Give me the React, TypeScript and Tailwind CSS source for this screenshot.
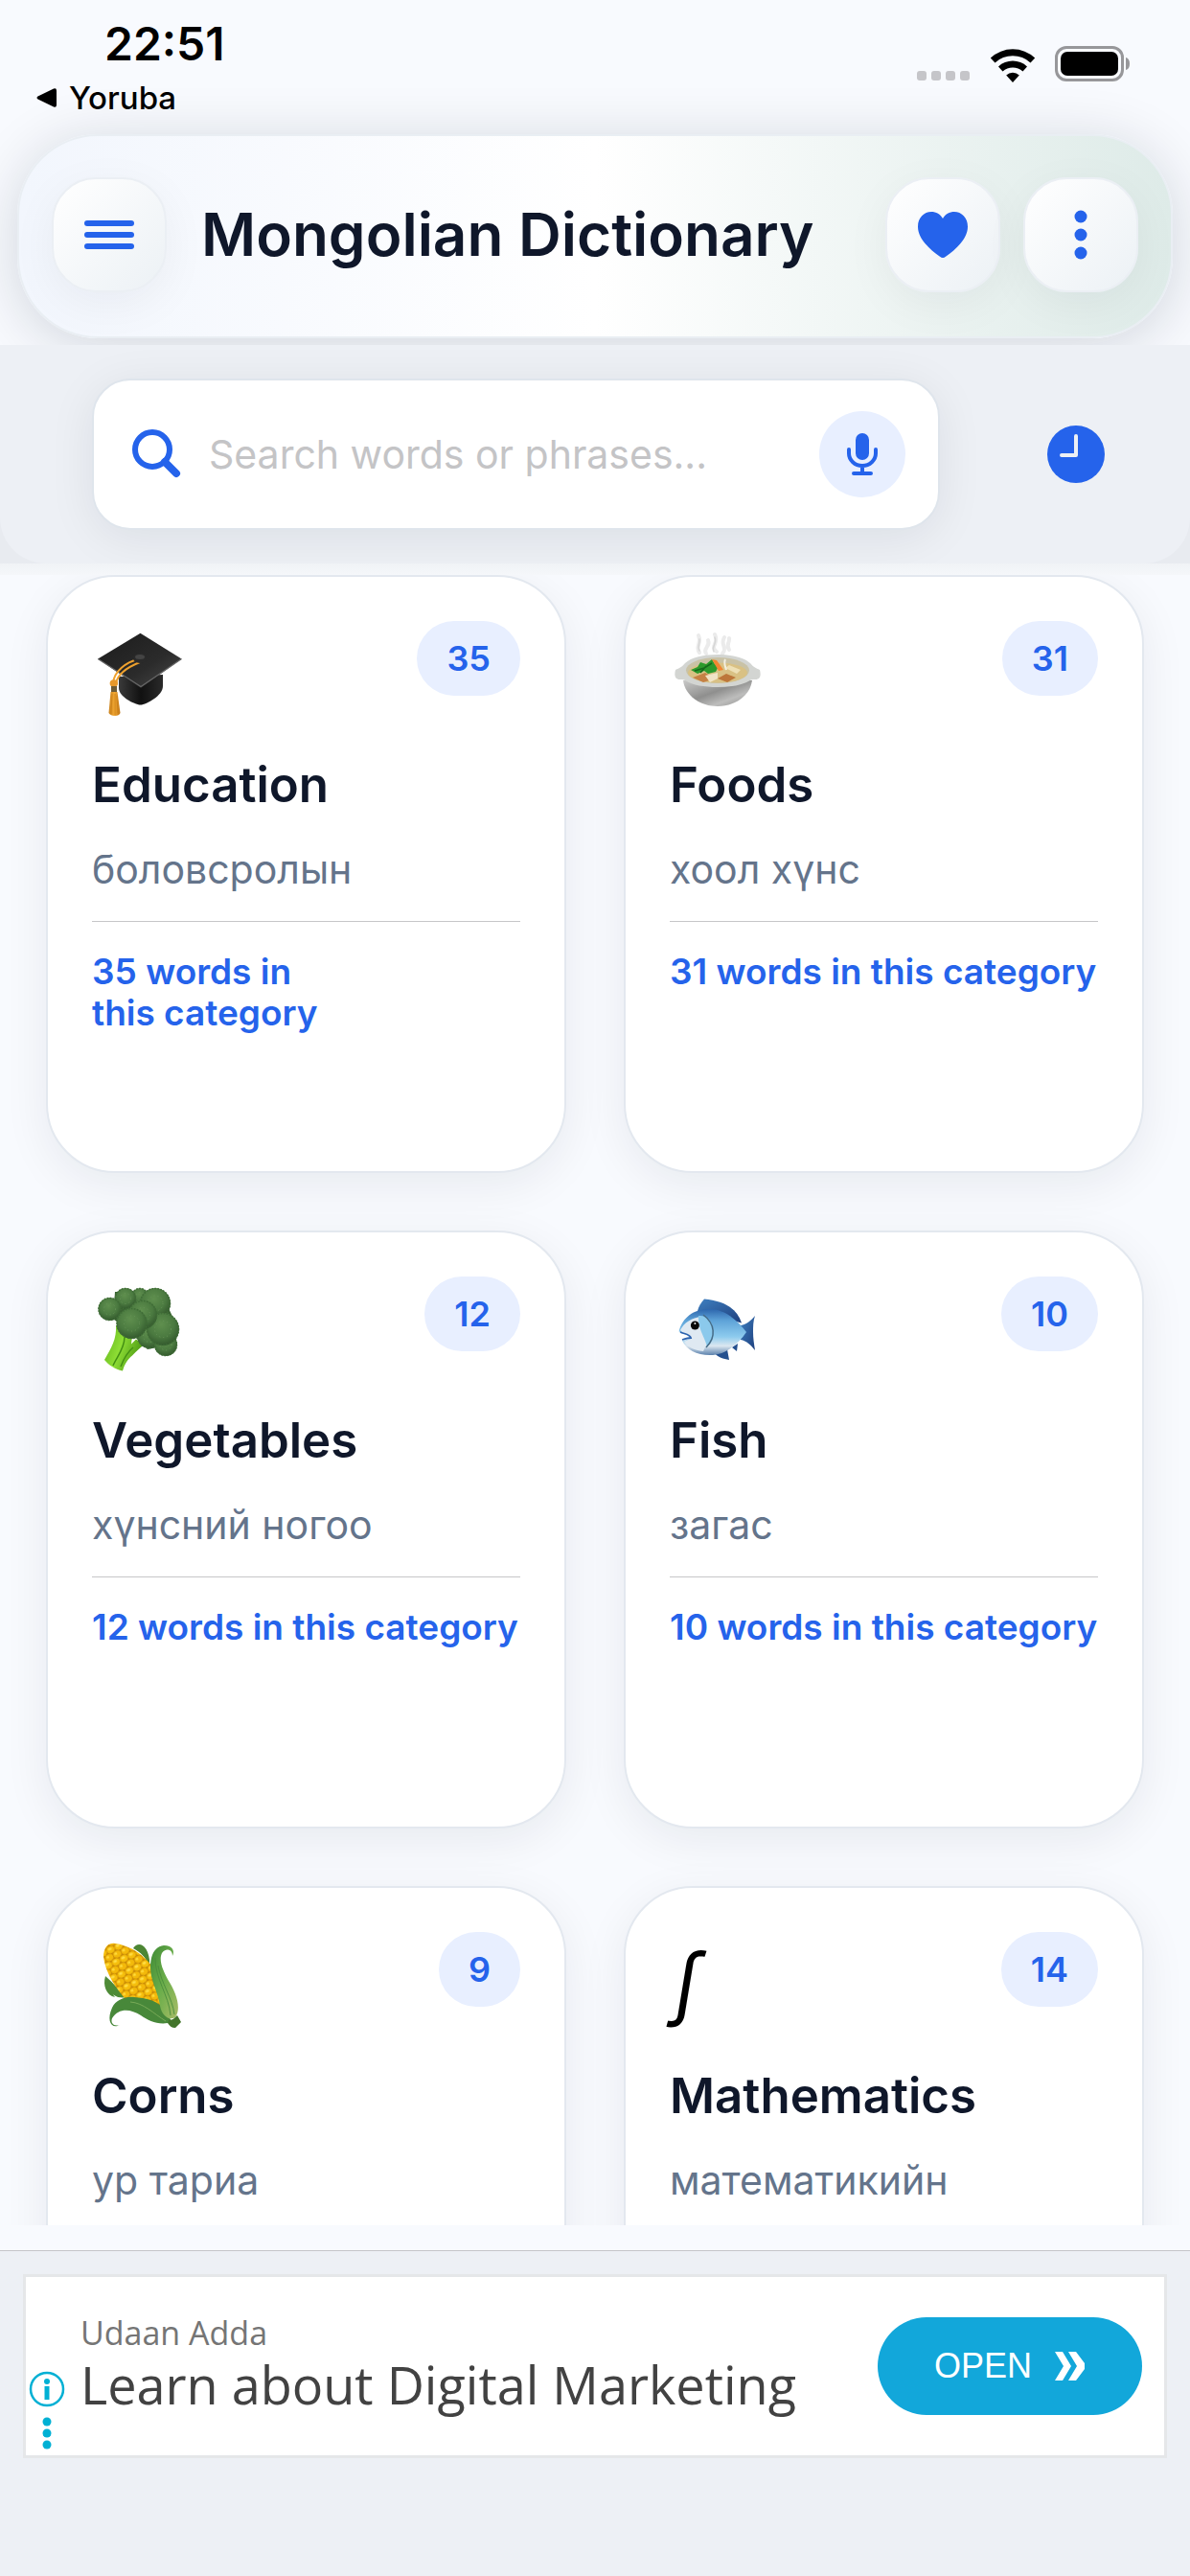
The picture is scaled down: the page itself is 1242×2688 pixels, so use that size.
import React from 'react';

const GraduationCap = () => (
  <svg viewBox="0 0 96 96" className="size-24" aria-hidden="true">
    <defs>
      <linearGradient id="capTop" x1="0" y1="0" x2="1" y2="1">
        <stop offset="0" stopColor="#1b1b1b" />
        <stop offset="0.6" stopColor="#2b2b2b" />
        <stop offset="1" stopColor="#4a4a4a" />
      </linearGradient>
      <linearGradient id="capBase" x1="0" y1="0" x2="1" y2="0">
        <stop offset="0" stopColor="#3a3a3a" />
        <stop offset="0.5" stopColor="#111" />
        <stop offset="1" stopColor="#2a2a2a" />
      </linearGradient>
      <linearGradient id="tassel" x1="0" y1="0" x2="1" y2="0">
        <stop offset="0" stopColor="#c9811c" />
        <stop offset="0.5" stopColor="#f2a833" />
        <stop offset="1" stopColor="#bf7415" />
      </linearGradient>
    </defs>
    <path d="M28 50v12c0 9 16 17 22.500 17.600C57 79 74 70 74 60V48z" fill="url(#capBase)" />
    <path d="M50.500 4.700 93.500 31.600 51 61.700 6.200 31.600z" fill="url(#capTop)" />
    <path d="M6.200 31.600 51 60.500l42.500-29" fill="none" stroke="#666" strokeWidth="1.200" />
    <path d="M48 32C36 35 23 44 22 57M50 35c-10 4-23 11-25 22" fill="none" stroke="#f0a22e" strokeWidth="2" />
    <ellipse cx="50" cy="31" rx="7" ry="5" fill="#2a2a2a" />
    <ellipse cx="50" cy="29.500" rx="5" ry="2.500" fill="#444" />
    <ellipse cx="22.800" cy="57" rx="4.200" ry="3.800" fill="#e8982a" />
    <rect x="20" y="60" width="6" height="6" fill="#6d5a35" />
    <path d="M19.500 66h7l3 22c-1 4-10 4-12 0z" fill="url(#tassel)" />
    <path d="M21 68l-1 21M24 68v22M26 70l1 18" stroke="#c98019" strokeWidth="0.800" />
  </svg>
);

const PotOfFood = () => (
  <svg viewBox="0 0 96 96" className="size-24" aria-hidden="true">
    <defs>
      <linearGradient id="bowl" x1="0" y1="0" x2="1" y2="1">
        <stop offset="0" stopColor="#c9c9c8" />
        <stop offset="0.450" stopColor="#8f8f8e" />
        <stop offset="0.700" stopColor="#bdbdbc" />
        <stop offset="1" stopColor="#8b8b8a" />
      </linearGradient>
    </defs>
    <path d="M31 25c-5-7 3-9-1-18M38 26c-4-6 5-7 2-14M49 24c-8-6 3-8-2-18M55 26c6-6-3-9 2-17M62 22c-4-5 1-7 0-12" fill="none" stroke="#ebebeb" strokeWidth="4" strokeLinecap="round" />
    <path d="M46 24c-3-6 4-8 1-15M31 23c-3-5 1-7 0-12" fill="none" stroke="#d6d6d6" strokeWidth="1.500" strokeLinecap="round" />
    <path d="M14 54c2 16 18 27 36 27s34-11 36-27z" fill="url(#bowl)" />
    <path d="M6 43c4-2 7-3 10-7 6-6 20-9 34-9s28 3 34 9c3 4 6 5 10 7 1 4 1 7-1 9-3 2-7 0-9 2-8 5-20 7-34 7s-26-2-34-7c-2-2-6 0-9-2-2-2-2-5-1-9z" fill="#d3d5d2" />
    <ellipse cx="50" cy="43.500" rx="33" ry="13.500" fill="#c9c2a6" />
    <ellipse cx="50" cy="46" rx="31" ry="10.500" fill="#d9c184" />
    <path d="M24 51l13-5 10 6-12 4z" fill="#c58144" />
    <path d="M37 49l13-3v6l-8 4z" fill="#f1e4c6" />
    <path d="M50 52l9-5 10 4-9 5z" fill="#bd773a" />
    <path d="M62 38l12 5-4 4-12-6z" fill="#eee0b5" />
    <path d="M22 43l7-3 3-5 6 2 6-5 3 5 4 2-3 6-8 2-4-3-7 3z" fill="#2c9a2c" />
    <path d="M26 44l10-3 8-5M32 46l6-7" stroke="#15691b" strokeWidth="1.500" fill="none" />
    <path d="M44 32l5 1 7 10-5 1z" fill="#f28632" />
    <path d="M58 32c-2 4 0 7 1 11" stroke="#f3efe2" strokeWidth="2" fill="none" />
  </svg>
);

const florets = [
  [50, 13, 9], [35, 15, 11], [60, 54, 13], [77, 63, 12], [66, 20, 16],
  [18.5, 26, 12], [74, 47, 17], [53, 32, 15], [41.5, 41, 16],
];

const Broccoli = () => (
  <svg viewBox="0 0 96 96" className="size-24" aria-hidden="true">
    <defs>
      <radialGradient id="floret" cx="0.45" cy="0.35" r="0.65">
        <stop offset="0" stopColor="#5f8f4e" />
        <stop offset="0.600" stopColor="#4b7a40" />
        <stop offset="1" stopColor="#33592d" />
      </radialGradient>
      <linearGradient id="stem" x1="0" y1="0" x2="1" y2="0.4">
        <stop offset="0" stopColor="#5aae17" />
        <stop offset="0.500" stopColor="#8ede35" />
        <stop offset="1" stopColor="#4f9c14" />
      </linearGradient>
    </defs>
    <path d="M25 43c1 14-5 24-12 36 4 5 11 10 19 11.500 2-7 5-12 10-16 5-5 8-8 12-11l-8-6-5 5 1-9z" fill="url(#stem)" />
    <path d="M34 55c0 13-9 22-12 30M43 66c-6 5-10 12-13 20" stroke="#438f13" strokeWidth="1.500" fill="none" />
    <path d="M24 8h48l14 30 2 24-30 6-14-14-22-18z" fill="#3b6433" />
    {florets.map(([x, y, r]) => (
      <g key={`${x}-${y}`}>
        <circle cx={x} cy={y} r={r} fill="url(#floret)" />
        <circle cx={x} cy={y} r={r - 0.5} fill="none" stroke="#3f6c36" strokeWidth="1.500" strokeDasharray="1.500 1.500" />
        <circle cx={x} cy={y} r={r / 2} fill="none" stroke="#69945a" strokeWidth="1" strokeDasharray="1 3" />
      </g>
    ))}
  </svg>
);

const Fish = () => (
  <svg viewBox="0 0 96 96" className="size-24" aria-hidden="true">
    <defs>
      <linearGradient id="fishBody" x1="0" y1="0" x2="0" y2="1">
        <stop offset="0" stopColor="#2d66ad" />
        <stop offset="0.250" stopColor="#5ea3d8" />
        <stop offset="0.600" stopColor="#8dcbee" />
        <stop offset="0.800" stopColor="#dbe7f0" />
        <stop offset="1" stopColor="#5c82ad" />
      </linearGradient>
      <linearGradient id="fishFin" x1="0" y1="0" x2="1" y2="1">
        <stop offset="0" stopColor="#3e7fc0" />
        <stop offset="1" stopColor="#1e3f7d" />
      </linearGradient>
    </defs>
    <path d="M29 28c1-5 4-9 7-12.500 20 2 34 9 39 25z" fill="url(#fishFin)" />
    <path d="M74 43c6-1 11-5 15-10-2 6-2 11-2 17s1 13 2 19c-4-5-9-10-15-11z" fill="url(#fishFin)" />
    <path d="M47 72c3 4 9 6 15 7l-2-11zM65 66l5 4 1-8z" fill="#24508f" />
    <path d="M9.600 49.500C13 35 25 26 41 26c17 0 30 12 39 24-9 13-22 24-38 24-14 0-25-6-29-15l9-2c-4-5-8-5-12-7.500z" fill="url(#fishBody)" />
    <path d="M11 48c4-8 12-13 22-14 8 6 10 22 2 36-10-1-17-5-20-10l7-3c-4-5-8-5-11-9z" fill="#dfe9f2" />
    <path d="M30 33c8-1 15 5 15 16 0 7-3 13-6 16-3-11-10-19-9-32z" fill="#8bc9ec" />
    <path d="M35 32c12 9 14 23 3 34" fill="none" stroke="#456b86" strokeWidth="1.500" />
    <path d="M11 50c4 2 10 2 11 6-3 0-6 1-9 2" fill="none" stroke="#2c62ae" strokeWidth="1.800" />
    <circle cx="26.400" cy="43" r="4.500" fill="#080808" />
    <circle cx="26.400" cy="41" r="1" fill="#eee" />
  </svg>
);

const Corn = () => (
  <svg viewBox="0 0 96 96" className="size-24" aria-hidden="true">
    <defs>
      <pattern id="kernels" width="9" height="14" patternUnits="userSpaceOnUse" patternTransform="rotate(-24)">
        <rect width="9" height="14" fill="#c98a06" />
        <ellipse cx="4.500" cy="3.500" rx="4.200" ry="3.400" fill="#f6bf0c" />
        <ellipse cx="0" cy="10.500" rx="4.200" ry="3.400" fill="#f3b90a" />
        <ellipse cx="9" cy="10.500" rx="4.200" ry="3.400" fill="#f3b90a" />
        <ellipse cx="4" cy="2.500" rx="2" ry="1.200" fill="#ffe04a" />
        <ellipse cx="8" cy="9.500" rx="2" ry="1.200" fill="#ffdc3c" />
      </pattern>
      <linearGradient id="husk" x1="0" y1="0" x2="1" y2="1">
        <stop offset="0" stopColor="#3f8a35" />
        <stop offset="0.500" stopColor="#6cae4b" />
        <stop offset="1" stopColor="#a9bc67" />
      </linearGradient>
    </defs>
    <path d="M43 9c5-8 15-4 17 12v8c-4-12-9-15-17-20z" fill="#4c8634" />
    <path d="M14 38c8 7 14 14 22 22-8 2-16-2-18-8l6 8c-9-2-13-12-10-22z" fill="#4e8b37" />
    <path d="M12 18C12 8 17 3 24 4c16 2 30 12 39 24 6 12 9 27 8 41-14-1-27 1-36-7C26 52 14 35 12 18z" fill="url(#kernels)" />
    <path d="M29 89c-9 5-14-5-8-18 4-8 13-12 23-11 13 1 21 3 28 9l12 17c-14 4-24-1-33-7-11-7-23-8-30 3-2 5 2 9 8 7z" fill="#48883a" />
    <path d="M84 17c0-8-8-8-11-3-4 8 2 20 7 29 7 11 14 28 7 38-6 4-14-1-16-12-2-15-10-26-10-40 0-14 5-22 14-23 8 0 12 5 9 11z" fill="url(#husk)" />
    <path d="M66 19c0 23 14 38 16 60M69 27c3 18 15 34 17 51" stroke="#4a8c3c" strokeWidth="0.900" fill="none" />
    <path d="M40 65c14 1 24 12 37 20" stroke="#78aa57" strokeWidth="1" fill="none" />
    <path d="M80 84c4 0 6-2 9-5l4 7-6 6c-4 0-6-2-8-5z" fill="#43752b" />
  </svg>
);

const categories = [
  {
    name: 'Education',
    native: 'боловсролын',
    count: 35,
    icon: <GraduationCap />,
    summary: '35 words in\nthis category',
  },
  { name: 'Foods', native: 'хоол хүнс', count: 31, icon: <PotOfFood />, summary: '31 words in this category' },
  { name: 'Vegetables', native: 'хүнсний ногоо', count: 12, icon: <Broccoli />, summary: '12 words in this category' },
  { name: 'Fish', native: 'загас', count: 10, icon: <Fish />, summary: '10 words in this category' },
  { name: 'Corns', native: 'ур тариа', count: 9, icon: <Corn /> },
  {
    name: 'Mathematics',
    native: 'математикийн',
    count: 14,
    icon: <span className="block h-24 pl-1 text-[80px] leading-[88px] text-black italic">∫</span>,
  },
];

const StatusBar = () => (
  <div className="flex h-[140px] items-start justify-between pr-[61px] pl-9">
    <div className="pt-4">
      <div className="pl-[73px] text-[48px] leading-[60px] font-semibold text-black">22:51</div>
      <a href="#yoruba" className="flex items-center gap-3 text-[33px] leading-[52px] font-medium text-black">
        <svg width="24" height="22" viewBox="0 0 24 22" aria-hidden="true">
          <path d="M3.500 9.500 20 1.500q3-1 3 2v15q0 3-3 2L3.500 12.500q-2-1.500 0-3z" />
        </svg>
        Yoruba
      </a>
    </div>
    <div className="flex items-end gap-5 pt-12">
      <svg width="56" height="36" viewBox="0 0 56 36" fill="#c5c5c9" aria-hidden="true">
        <rect x="0" y="24" width="10" height="10" rx="3" />
        <rect x="15" y="24" width="10" height="10" rx="3" />
        <rect x="30" y="24" width="10" height="10" rx="3" />
        <rect x="45" y="24" width="10" height="10" rx="3" />
      </svg>
      <svg width="48" height="36" viewBox="0 0 48 36" aria-hidden="true">
        <path d="M0.800 10.500a34 34 0 0 1 46.400 0L42.500 15.500a27 27 0 0 0-37 0z" />
        <path d="M9 19.500a22 22 0 0 1 30 0L34.500 24.500a15.500 15.500 0 0 0-21 0z" />
        <path d="M17.200 28.500a10 10 0 0 1 13.600 0L24 36z" />
      </svg>
      <svg width="80" height="38" viewBox="0 0 80 38" aria-hidden="true">
        <rect x="1.500" y="1.500" width="69" height="34" rx="10.500" fill="none" stroke="#97979a" strokeWidth="3" />
        <rect x="6" y="6" width="60" height="25" rx="7" />
        <path d="M74 12q4 1 4 6.500T74 25z" fill="#97979a" />
      </svg>
    </div>
  </div>
);

const headerButton =
  'flex size-[120px] shrink-0 items-center justify-center rounded-[46px] border-2 border-[#ebeff4] bg-linear-to-br from-white to-[#ecf1f5] shadow-[0_12px_48px_rgba(15,23,42,0.05)]';

const Header = () => (
  <header className="mx-[18px] mb-[7px] flex h-[213px] items-center gap-6 rounded-[84px] border-2 border-[#e9eef3] bg-linear-to-r from-[#f2f6fd] via-white to-[#deebe8] px-[34px] pb-1 shadow-[0_8px_60px_rgba(15,23,42,0.16)]">
    <button type="button" aria-label="Menu" className={headerButton}>
      <svg width="52" height="30" viewBox="0 0 52 30" fill="#2563eb" aria-hidden="true">
        <rect width="52" height="6" rx="3" />
        <rect y="12" width="52" height="6" rx="3" />
        <rect y="24" width="52" height="6" rx="3" />
      </svg>
    </button>
    <h1 className="flex-1 pl-3 text-[62px] leading-[80px] font-semibold whitespace-nowrap text-[#0f172a]">
      Mongolian Dictionary
    </h1>
    <button type="button" aria-label="Favourites" className={headerButton}>
      <svg width="52" height="50" viewBox="0 0 52 50" fill="#2563eb" aria-hidden="true">
        <path d="M26 49c-1 0-2-.5-3-1.300C12 40 0 29 0 16.500 0 7 6.500 1 14 1c5 0 9.500 2.500 12 7 2.500-4.500 7-7 12-7 7.500 0 14 6 14 15.500C52 29 40 40 29 47.700c-1 .8-2 1.300-3 1.300z" />
      </svg>
    </button>
    <button type="button" aria-label="More" className={headerButton}>
      <svg width="14" height="52" viewBox="0 0 14 52" fill="#2563eb" aria-hidden="true">
        <circle cx="7" cy="7" r="6.500" />
        <circle cx="7" cy="26" r="6.500" />
        <circle cx="7" cy="45" r="6.500" />
      </svg>
    </button>
  </header>
);

const SearchBar = () => (
  <div className="relative bg-[#e8ebf0]">
    <div className="flex items-center rounded-b-[48px] bg-[#edf0f5] pt-[35px] pr-[74px] pb-[35px] pl-24">
      <div className="flex h-[158px] min-w-0 flex-1 items-center rounded-[40px] border-2 border-[#dfe5ec] bg-white pr-[34px] pl-10 shadow-[0_8px_48px_rgba(15,23,42,0.08)]">
        <svg width="52" height="52" viewBox="0 0 52 52" fill="none" stroke="#2563eb" className="shrink-0" aria-hidden="true">
          <circle cx="21" cy="21" r="18" strokeWidth="6" />
          <path d="M34 34 46 46" strokeWidth="8" strokeLinecap="round" />
        </svg>
        <input
          type="text"
          aria-label="Search words or phrases"
          placeholder="Search words or phrases..."
          className="min-w-0 flex-1 bg-transparent pl-7 text-[41px] leading-[56px] text-[#0f172a] outline-none placeholder:text-[#c4c4c6]"
        />
        <button
          type="button"
          aria-label="Voice search"
          className="flex size-[90px] shrink-0 items-center justify-center rounded-full bg-[#e8efff]"
        >
          <svg width="32" height="44" viewBox="0 0 32 44" fill="none" stroke="#2563eb" strokeWidth="4" strokeLinecap="round" aria-hidden="true">
            <rect x="9" y="0" width="14" height="28" rx="7" fill="#2563eb" stroke="none" />
            <path d="M2 17v4a14 13 0 0 0 28 0v-4M16 35v6M7 42h18" />
          </svg>
        </button>
      </div>
      <button type="button" aria-label="History" className="ml-[97px] flex size-[90px] shrink-0 items-center justify-center">
        <svg width="60" height="60" viewBox="0 0 60 60" aria-hidden="true">
          <circle cx="30" cy="30" r="30" fill="#2563eb" />
          <path d="M30 11v20H15" fill="none" stroke="#edf0f5" strokeWidth="4" strokeLinecap="round" strokeLinejoin="round" />
        </svg>
      </button>
    </div>
  </div>
);

const AdBanner = () => (
  <footer className="border-t border-[#c5c5c9] bg-[#edf0f5] px-6 pt-6 pb-[123px]">
    <div className="flex h-[192px] items-center border-[3px] border-[#e5e7e9] bg-white pr-[23px] pl-[3px]">
      <div className="flex flex-col items-center self-end pb-1.5">
        <svg width="38" height="82" viewBox="0 0 38 82" fill="#00b0d4" aria-hidden="true">
          <circle cx="19" cy="19" r="17" fill="none" stroke="#00b0d4" strokeWidth="2.500" />
          <circle cx="19" cy="11" r="3" />
          <rect x="16.500" y="16" width="5" height="14" />
          <circle cx="19" cy="53" r="4.500" />
          <circle cx="19" cy="65" r="4.500" />
          <circle cx="19" cy="77" r="4.500" />
        </svg>
      </div>
      <div className="flex-1 pb-1.5 pl-4 font-['Open_Sans',sans-serif] whitespace-nowrap">
        <p className="text-[34px] leading-[44px] text-[#757575]">Udaan Adda</p>
        <p className="text-[54px] leading-[64px] font-medium text-[#424242]">Learn about Digital Marketing</p>
      </div>
      <a
        href="#open"
        className="flex h-[102px] w-[276px] items-center justify-center gap-6 rounded-full bg-[#12a7da] font-['Liberation_Sans',sans-serif] text-[36px] text-white"
      >
        OPEN
        <svg width="32" height="30" viewBox="0 0 32 30" fill="#fff" aria-hidden="true">
          <path d="M0 0h8l9 15-9 15H0l9-15zM14 0h8l9 12v6l-9 12h-8l9-15z" />
        </svg>
      </a>
    </div>
  </footer>
);

const App = () => {
  return (
    <div className="flex h-screen flex-col overflow-hidden bg-[#f8fafe] font-['Inter',sans-serif]">
      <StatusBar />
      <Header />
      <SearchBar />
      <div className="relative h-3 bg-linear-to-b from-[#f0f3f6] to-[#f5f7fa]" />

      <main className="min-h-0 flex-1 overflow-hidden px-12">
        <div className="grid grid-cols-2 gap-[60px]">
          {categories.map((category) => (
            <article
              key={category.name}
              className="min-h-[624px] rounded-[72px] border-2 border-[#e3e8ef] bg-white p-[46px] shadow-[0_12px_48px_rgba(15,23,42,0.07)]"
            >
              <div className="flex items-start justify-between">
                <div className="pt-2">{category.icon}</div>
                <span className="rounded-full bg-[#e8efff] px-[31px] text-[36px] leading-[78px] font-semibold text-[#2563eb]">
                  {category.count}
                </span>
              </div>
              <h2 className="mt-[35px] text-[51px] leading-[64px] font-semibold text-[#0f172a]">{category.name}</h2>
              <p className="mt-7 text-[41px] leading-[56px] text-[#64748b]">{category.native}</p>
              {category.summary && (
                <p className="mt-[26px] border-t border-[#c6c6c8] pt-[30px] text-[37px] leading-[43px] font-semibold whitespace-pre-line text-[#2563eb]">
                  {category.summary}
                </p>
              )}
            </article>
          ))}
        </div>
      </main>

      <div className="h-[26px]" />
      <AdBanner />
    </div>
  );
};

export default App;
